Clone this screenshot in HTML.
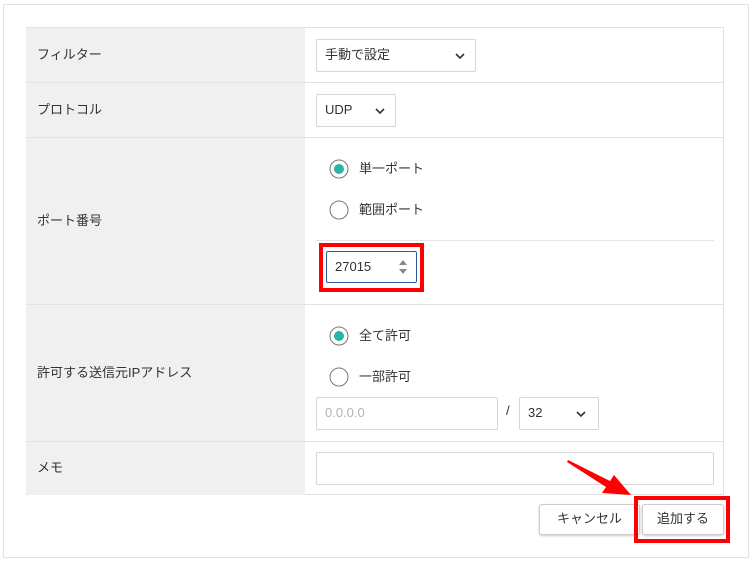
<!DOCTYPE html>
<html><head><meta charset="utf-8"><style>
*{box-sizing:border-box;margin:0;padding:0}
body{width:753px;height:567px;background:#fff;font-family:"Liberation Sans","Noto Sans CJK JP",sans-serif;font-size:13px;line-height:15px;color:#333;position:relative;overflow:hidden}
.a{position:absolute}
.lab{position:absolute;left:26px;width:279px;background:#f0f0f0;border-bottom:1px solid #e2e2e2;display:flex;align-items:center;padding-left:11px;padding-bottom:2px}
.hl{position:absolute;left:305px;width:419px;height:1px;background:#e2e2e2}
.box{position:absolute;border:1px solid #d6d6d6;border-radius:2px;background:#fff;display:flex;align-items:center;padding-left:8px;padding-bottom:2px}
.rad{position:absolute;display:flex;align-items:center}
.rad span{margin-left:10px;margin-top:-2px}
.btn{position:absolute;border:1px solid #ccc;border-radius:3px;background:#fff;box-shadow:0 1px 2px rgba(0,0,0,.2);display:flex;align-items:center;justify-content:center;font-size:13px;padding-bottom:2px}
</style></head><body>
<div class="a" style="left:3px;top:4px;width:746px;height:554px;border:1px solid #e2e2e2"></div>
<div class="a" style="left:26px;top:27px;width:698px;height:468px;border:1px solid #e2e2e2"></div>
<div class="lab" style="top:28px;height:55px">フィルター</div>
<div class="lab" style="top:83px;height:55px">プロトコル</div>
<div class="lab" style="top:138px;height:167px">ポート番号</div>
<div class="lab" style="top:305px;height:137px">許可する送信元IPアドレス</div>
<div class="lab" style="top:442px;height:53px;border-bottom:none">メモ</div>
<div class="hl" style="top:82px"></div>
<div class="hl" style="top:137px"></div>
<div class="hl" style="top:304px"></div>
<div class="hl" style="top:441px"></div>
<div class="a" style="left:316px;top:240px;width:398px;height:1px;background:#e6e6e6"></div>

<div class="box" style="left:316px;top:39px;width:160px;height:33px">手動で設定<svg class="a" style="left:138px;top:12px" width="10" height="8"><path d="M1 2l4 4 4-4" stroke="#333" stroke-width="1.6" fill="none"/></svg></div>
<div class="box" style="left:316px;top:94px;width:80px;height:33px">UDP<svg class="a" style="left:58px;top:12px" width="10" height="8"><path d="M1 2l4 4 4-4" stroke="#333" stroke-width="1.6" fill="none"/></svg></div>

<div class="rad" style="left:329px;top:159px"><svg width="20" height="20"><circle cx="10" cy="10" r="9" fill="#fff" stroke="#777"/><circle cx="10" cy="10" r="5" fill="#26b5a6"/></svg><span>単一ポート</span></div>
<div class="rad" style="left:329px;top:200px"><svg width="20" height="20"><circle cx="10" cy="10" r="9" fill="#fff" stroke="#777"/></svg><span>範囲ポート</span></div>
<div class="a" style="left:319px;top:243px;width:105px;height:49px;border:4px solid #f00"></div>
<div class="box" style="left:326px;top:251px;width:91px;height:32px;border-color:#2a5b9a">27015<svg class="a" style="left:71px;top:8px" width="10" height="14"><path d="M1 5l4-5 4 5z M1 9l4 5 4-5z" fill="#888"/></svg></div>

<div class="rad" style="left:329px;top:326px"><svg width="20" height="20"><circle cx="10" cy="10" r="9" fill="#fff" stroke="#777"/><circle cx="10" cy="10" r="5" fill="#26b5a6"/></svg><span>全て許可</span></div>
<div class="rad" style="left:329px;top:367px"><svg width="20" height="20"><circle cx="10" cy="10" r="9" fill="#fff" stroke="#777"/></svg><span>一部許可</span></div>
<div class="box" style="left:316px;top:397px;width:182px;height:33px;color:#aab5c0">0.0.0.0</div>
<div class="a" style="left:506px;top:403px">/</div>
<div class="box" style="left:519px;top:397px;width:80px;height:33px">32<svg class="a" style="left:56px;top:12px" width="10" height="8"><path d="M1 2l4 4 4-4" stroke="#333" stroke-width="1.6" fill="none"/></svg></div>

<div class="box" style="left:316px;top:452px;width:398px;height:33px"></div>

<div class="btn" style="left:539px;top:504px;width:101px;height:31px">キャンセル</div>
<div class="a" style="left:634px;top:496px;width:96px;height:47px;border:4px solid #f00"></div>
<div class="btn" style="left:642px;top:504px;width:82px;height:31px">追加する</div>
<svg class="a" style="left:560px;top:450px" width="90" height="50"><polygon points="8,10 50,31 54,25 71,45 42,43 46,37 7,12" fill="#f00"/></svg>
</body></html>
